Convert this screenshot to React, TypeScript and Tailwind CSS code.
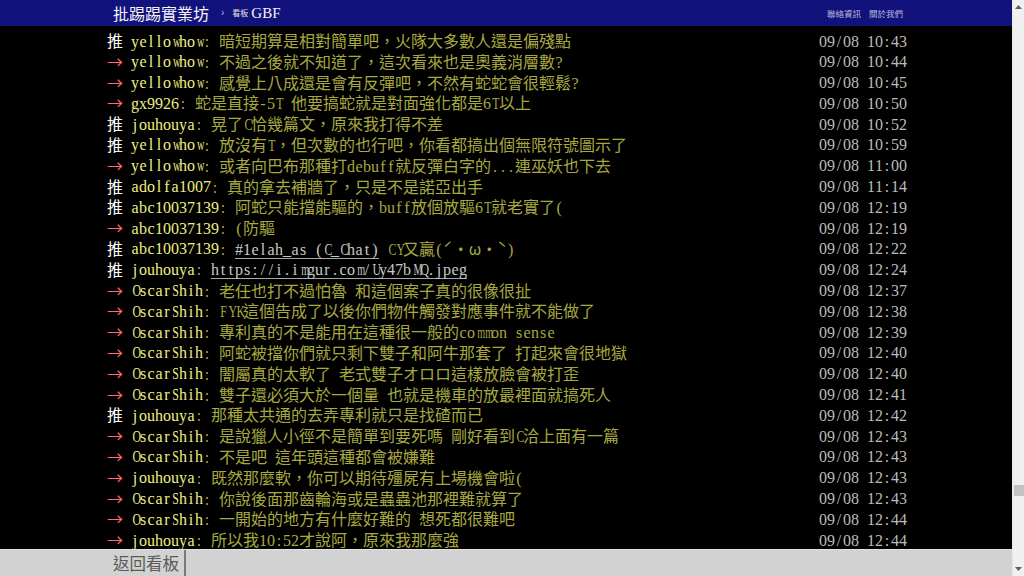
import React from "react";

type Row = { tag: "推" | "→"; user: string; content: string; time: string; link?: "full" | "part" };

const rows: Row[] = [
  { tag: "推", user: "yellowhow", content: "暗短期算是相對簡單吧，火隊大多數人還是偏殘點", time: "09/08 10:43" },
  { tag: "→", user: "yellowhow", content: "不過之後就不知道了，這次看來也是奧義消層數?", time: "09/08 10:44" },
  { tag: "→", user: "yellowhow", content: "感覺上八成還是會有反彈吧，不然有蛇蛇會很輕鬆?", time: "09/08 10:45" },
  { tag: "→", user: "gx9926", content: "蛇是直接-5T 他要搞蛇就是對面強化都是6T以上", time: "09/08 10:50" },
  { tag: "推", user: "jouhouya", content: "晃了C恰幾篇文，原來我打得不差", time: "09/08 10:52" },
  { tag: "推", user: "yellowhow", content: "放沒有T，但次數的也行吧，你看都搞出個無限符號圖示了", time: "09/08 10:59" },
  { tag: "→", user: "yellowhow", content: "或者向巴布那種打debuff就反彈白字的...連巫妖也下去", time: "09/08 11:00" },
  { tag: "推", user: "adolfa1007", content: "真的拿去補牆了，只是不是諾亞出手", time: "09/08 11:14" },
  { tag: "推", user: "abc10037139", content: "阿蛇只能擋能驅的，buff放個放驅6T就老實了(", time: "09/08 12:19" },
  { tag: "→", user: "abc10037139", content: "(防驅", time: "09/08 12:19" },
  { tag: "推", user: "abc10037139", content: "CY又贏(ˊ・ω・ˋ)", time: "09/08 12:22", link: "part" },
  { tag: "推", user: "jouhouya", content: "https://i.imgur.com/Uy47bMQ.jpeg", time: "09/08 12:24", link: "full" },
  { tag: "→", user: "OscarShih", content: "老任也打不過怕魯 和這個案子真的很像很扯", time: "09/08 12:37" },
  { tag: "→", user: "OscarShih", content: "FYK這個告成了以後你們物件觸發對應事件就不能做了", time: "09/08 12:38" },
  { tag: "→", user: "OscarShih", content: "專利真的不是能用在這種很一般的common sense", time: "09/08 12:39" },
  { tag: "→", user: "OscarShih", content: "阿蛇被擋你們就只剩下雙子和阿牛那套了 打起來會很地獄", time: "09/08 12:40" },
  { tag: "→", user: "OscarShih", content: "闇屬真的太軟了 老式雙子オロロ這樣放臉會被打歪", time: "09/08 12:40" },
  { tag: "→", user: "OscarShih", content: "雙子還必須大於一個量 也就是機車的放最裡面就搞死人", time: "09/08 12:41" },
  { tag: "推", user: "jouhouya", content: "那種太共通的去弄專利就只是找碴而已", time: "09/08 12:42" },
  { tag: "→", user: "OscarShih", content: "是說獵人小徑不是簡單到要死嗎 剛好看到C洽上面有一篇", time: "09/08 12:43" },
  { tag: "→", user: "OscarShih", content: "不是吧 這年頭這種都會被嫌難", time: "09/08 12:43" },
  { tag: "→", user: "jouhouya", content: "既然那麼軟，你可以期待殭屍有上場機會啦(", time: "09/08 12:43" },
  { tag: "→", user: "OscarShih", content: "你說後面那齒輪海或是蟲蟲池那裡難就算了", time: "09/08 12:43" },
  { tag: "→", user: "OscarShih", content: "一開始的地方有什麼好難的 想死都很難吧", time: "09/08 12:44" },
  { tag: "→", user: "jouhouya", content: "所以我10:52才說阿，原來我那麼強", time: "09/08 12:44" },
];

function splitRuns(text: string) {
  const out: { latin: boolean; t: string }[] = [];
  for (const ch of Array.from(text)) {
    const latin = ch.charCodeAt(0) < 128;
    const last = out[out.length - 1];
    if (last && last.latin === latin) last.t += ch;
    else out.push({ latin, t: ch });
  }
  return out;
}

function scaleFor(ch: string) {
  if ("mwMW".includes(ch)) return "scale-x-[0.64]";
  if (/[A-HK-Z]/.test(ch)) return "scale-x-[0.74]";
  return "";
}

function HalfChar({ ch, u }: { ch: string; u?: boolean }) {
  return (
    <span
      className={
        u
          ? "inline-block w-[8px] border-b border-[#a8a8a8] text-center align-baseline leading-[17px]"
          : "inline-block w-[8px] text-center align-baseline"
      }
    >
      <span className={"inline-block " + scaleFor(ch)}>{ch === " " ? "\u00a0" : ch}</span>
    </span>
  );
}

function T({ text, u }: { text: string; u?: boolean }) {
  return (
    <>
      {splitRuns(text).map((r, i) =>
        r.latin ? (
          <span key={i} className="font-['Liberation_Serif',serif]">
            {Array.from(r.t).map((ch, j) => (
              <HalfChar key={j} ch={ch} u={u} />
            ))}
          </span>
        ) : (
          <span
            key={i}
            className={
              u
                ? "font-['Noto_Sans_CJK_TC',sans-serif] underline decoration-[#a8a8a8]"
                : "font-['Noto_Sans_CJK_TC',sans-serif]"
            }
          >
            {r.t}
          </span>
        )
      )}
    </>
  );
}

function PushRow({ r }: { r: Row }) {
  return (
    <div className="flex h-[20.8px] items-center whitespace-pre text-[16px] leading-[20.8px]">
      <span className={r.tag === "推" ? "text-white" : "text-[#ff6a6a]"}>
        <T text={r.tag} />
        <T text=" " />
      </span>
      <span className="text-[#eeee80]">
        <T text={r.user} />
      </span>
      <span className="text-[#a8a840]">
        <T text=": " />
        {r.link === "full" ? (
          <span className="text-[#c8c8c8]">
            <T text={r.content} u />
          </span>
        ) : r.link === "part" ? (
          <>
            <span className="text-[#c8c8c8]">
              <T text="#1elah_as (C_Chat)" u />
            </span>
            <T text=" " />
            <T text={r.content} />
          </>
        ) : (
          <T text={r.content} />
        )}
      </span>
      <span className="ml-auto text-[#bbbbbb]">
        <T text={r.time} />
      </span>
    </div>
  );
}

export default function App() {
  return (
    <div className="flex h-[576px] w-[1024px] overflow-hidden bg-black">
      <div className="flex w-[1012px] flex-col">
        <div className="flex h-[26px] shrink-0 items-center bg-[#12127c]">
          <div className="ml-[107px] flex w-[800px] items-center pl-[6px] pr-[4px]">
            <span className="font-['Noto_Sans_CJK_TC',sans-serif] text-[16px] leading-none text-[#f4f4f4]">批踢踢實業坊</span>
            <span className="ml-[12px] font-['Liberation_Sans',sans-serif] text-[10px] leading-none text-[#b8b8d8]">›</span>
            <span className="ml-[8px] font-['Noto_Sans_CJK_TC',sans-serif] text-[8px] leading-none text-[#e0e0e0]">看板</span>
            <span className="ml-[3px] font-['Liberation_Serif',serif] text-[15px] leading-none text-[#f4f4f4]">GBF</span>
            <div className="ml-auto flex gap-[8px] font-['Noto_Sans_CJK_TC',sans-serif] text-[8.5px] leading-none text-[#b8b8d8]">
              <span>聯絡資訊</span>
              <span>關於我們</span>
            </div>
          </div>
        </div>
        <div className="flex-1 overflow-hidden pt-[5px]">
          <div className="ml-[107px] w-[800px]">
            {rows.map((r, i) => (
              <PushRow key={i} r={r} />
            ))}
          </div>
        </div>
        <div className="flex h-[27px] shrink-0 border-t border-[#e2e2e2] bg-[#d2d2d2]">
          <div className="ml-[107px] flex items-center border-r-2 border-[#7a7a7a] pl-[6px] pr-[5px] font-['Noto_Sans_CJK_TC',sans-serif] text-[16.5px] text-[#5a5a5a]">
            返回看板
          </div>
        </div>
      </div>
      <div className="flex w-[12px] flex-col items-center border-l border-[#e8e8e8] bg-[#f0f0f0]">
        <svg width="7" height="4" viewBox="0 0 7 4" className="mt-[5px]">
          <polygon points="0,4 7,4 3.5,0" fill="#606060" />
        </svg>
        <div className="flex-1" />
        <div className="mb-[71px] h-[11px] w-[10px] bg-[#c2c2c2]" />
        <svg width="7" height="4" viewBox="0 0 7 4" className="mb-[5px]">
          <polygon points="0,0 7,0 3.5,4" fill="#606060" />
        </svg>
      </div>
    </div>
  );
}
